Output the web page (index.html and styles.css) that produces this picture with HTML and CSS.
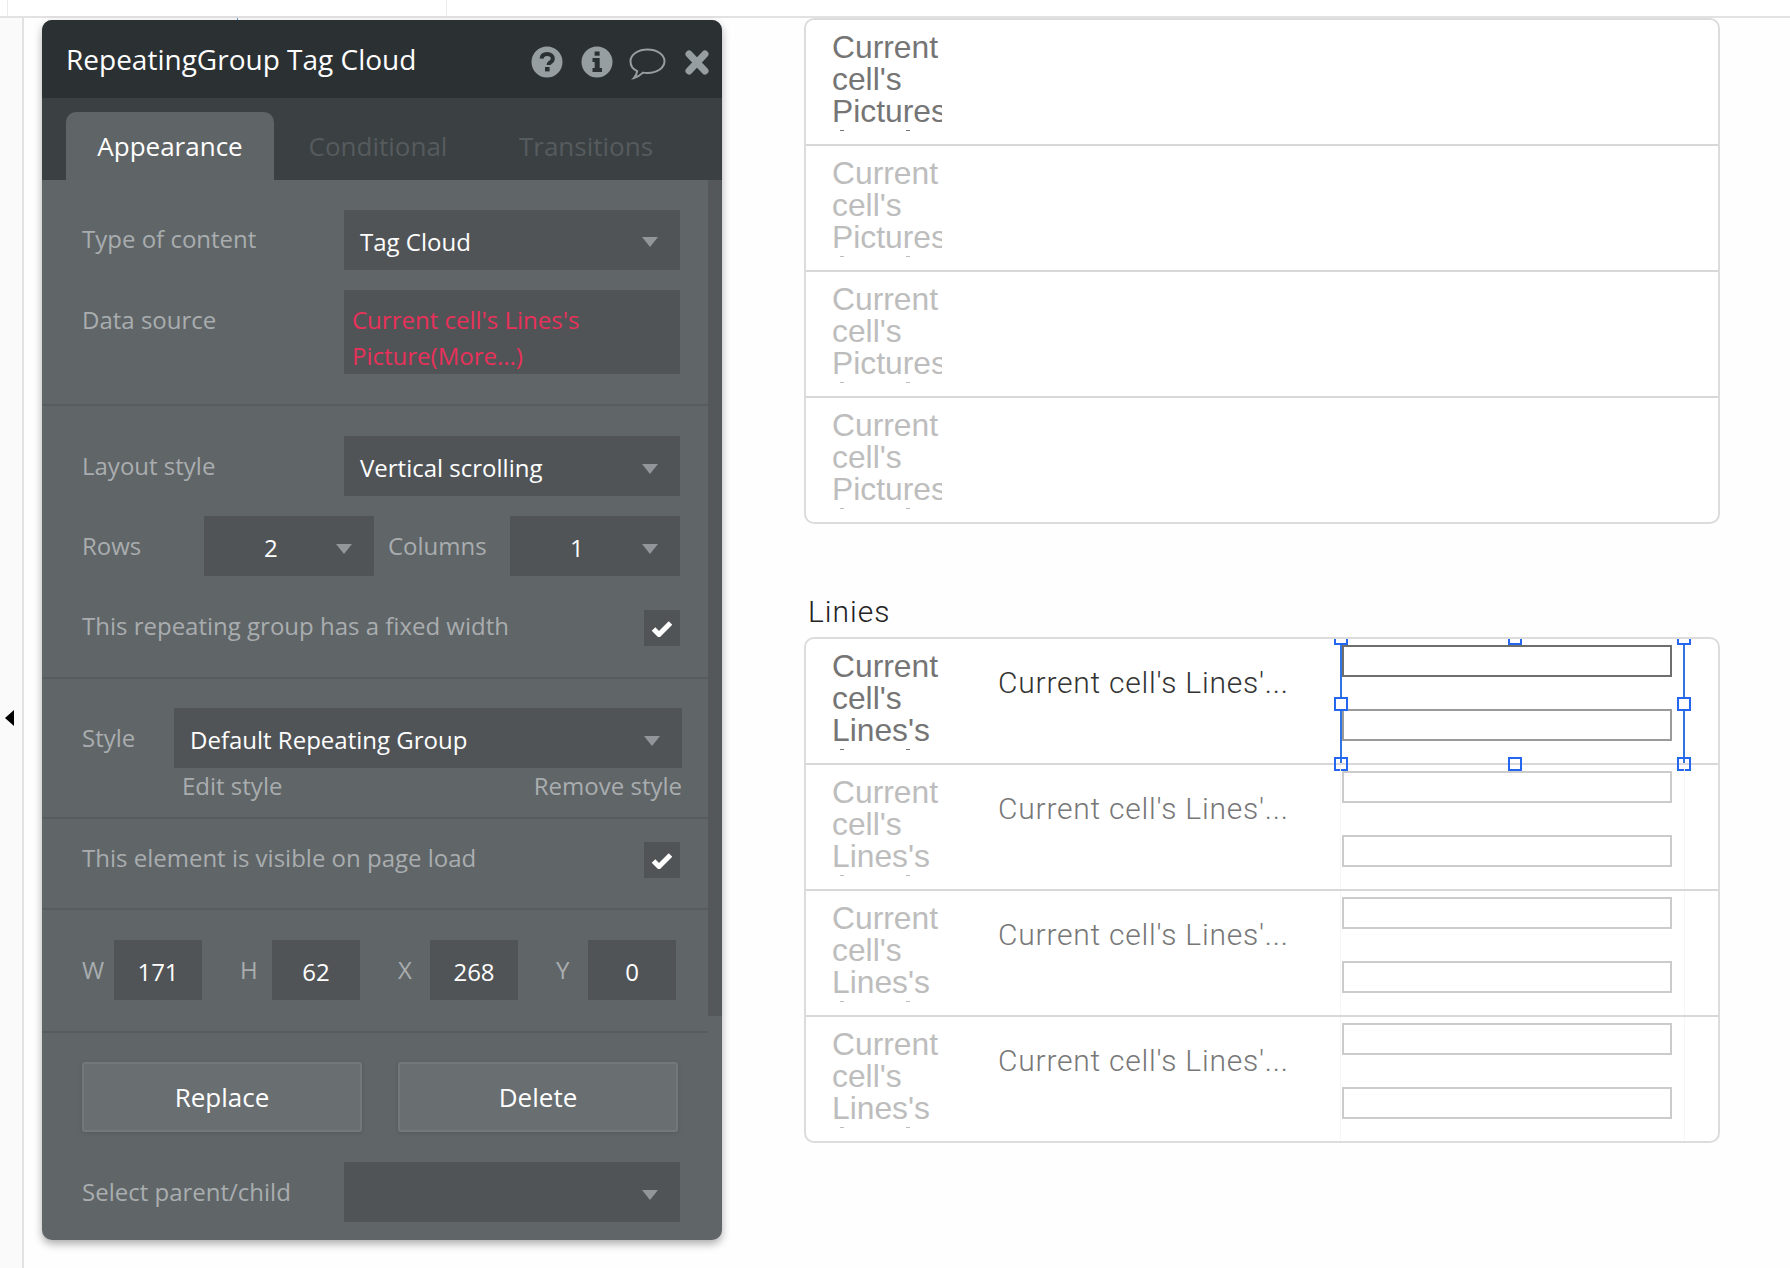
FILE: index.html
```html
<!DOCTYPE html>
<html lang="en">
<head>
<meta charset="utf-8">
<title>RepeatingGroup Tag Cloud</title>
<link rel="stylesheet" href="styles.css">
</head>
<body>
<div class="topbar"><span class="tb-a"></span><span class="tb-b"></span></div>
<div class="workspace">
  <div class="gutter"><span class="collapse"></span></div>
  <span class="ruler-tick"></span>
  <aside class="panel">
    <header class="panel-head">
      <h1 class="panel-title">RepeatingGroup Tag Cloud</h1>
      <div class="panel-icons">
        <svg class="ic" width="32" height="32" viewBox="0 0 32 32"><circle cx="16" cy="16" r="15.5" fill="#979ea1"/><path d="M10.6 12.6c.3-3 2.6-4.6 5.6-4.6 3.2 0 5.6 1.8 5.6 4.5 0 2-1 3-2.6 4-1.2.8-1.6 1.3-1.6 2.5" fill="none" stroke="#2b3033" stroke-width="4"/><rect x="14" y="21" width="4.6" height="4.400" fill="#2b3033"/></svg>
        <svg class="ic" width="32" height="32" viewBox="0 0 32 32"><circle cx="16" cy="16" r="15.5" fill="#979ea1"/><rect x="13.6" y="5.5" width="5" height="4.2" fill="#2b3033"/><path d="M11.5 12h7.2v10h2.3v4H11.5v-4h2.2v-6h-2.2z" fill="#2b3033"/></svg>
        <svg class="ic ic-bubble" width="37" height="32" viewBox="0 0 37 32"><path d="M18.5 1.5c9 0 17 4.800 17 11.800 0 7-8 11.700-17 11.700-1.500 0-3 0-4.500-.4-2.500 2.400-5.500 4.400-9 5.400 1.700-2 2.800-4 3.200-6.900C4.500 21.500 1.500 17.700 1.500 13.300c0-7 8-11.800 17-11.800z" fill="none" stroke="#979ea1" stroke-width="2"/></svg>
        <svg class="ic ic-close" width="24" height="25" viewBox="0 0 24 25"><path d="M4 4l16 17M20 4L4 21" fill="none" stroke="#979ea1" stroke-width="7" stroke-linecap="round"/></svg>
      </div>
    </header>
    <nav class="tabs">
      <span class="tab active">Appearance</span>
      <span class="tab tab-2">Conditional</span>
      <span class="tab tab-3">Transitions</span>
    </nav>
    <div class="panel-body">
      <span class="scrollbar"></span>
      <section class="section s1">
        <div class="row r60">
          <span class="label w-label">Type of content</span>
          <div class="select w-336"><span class="value">Tag Cloud</span><span class="arrow"></span></div>
        </div>
        <div class="row r84">
          <span class="label w-label label-top">Data source</span>
          <div class="expr">Current cell's Lines's<br>Picture(More...)</div>
        </div>
      </section>
      <div class="divider"></div>
      <section class="section s2">
        <div class="row r60">
          <span class="label w-label">Layout style</span>
          <div class="select w-336"><span class="value">Vertical scrolling</span><span class="arrow"></span></div>
        </div>
        <div class="row r60">
          <span class="label w-rows">Rows</span>
          <div class="select w-170 num"><span class="value">2</span><span class="arrow"></span></div>
          <span class="label w-cols">Columns</span>
          <div class="select w-170 num"><span class="value">1</span><span class="arrow"></span></div>
        </div>
        <div class="row check-row">
          <span class="label">This repeating group has a fixed width</span>
          <span class="check"><svg width="22" height="17" viewBox="0 0 22 17"><path d="M2.500 9l5.500 5.500L19.500 3" fill="none" stroke="#fff" stroke-width="5"/></svg></span>
        </div>
      </section>
      <div class="divider"></div>
      <section class="section s3">
        <div class="row r60">
          <span class="label w-style">Style</span>
          <div class="select w-508"><span class="value">Default Repeating Group</span><span class="arrow"></span></div>
        </div>
        <div class="style-links"><span>Edit style</span><span>Remove style</span></div>
      </section>
      <div class="divider"></div>
      <section class="section s4">
        <div class="row check-row">
          <span class="label">This element is visible on page load</span>
          <span class="check"><svg width="22" height="17" viewBox="0 0 22 17"><path d="M2.500 9l5.500 5.500L19.500 3" fill="none" stroke="#fff" stroke-width="5"/></svg></span>
        </div>
      </section>
      <div class="divider"></div>
      <section class="section s5">
        <div class="dims">
          <span class="label">W</span><span class="num-box">171</span>
          <span class="label dim-gap">H</span><span class="num-box">62</span>
          <span class="label dim-gap">X</span><span class="num-box">268</span>
          <span class="label dim-gap">Y</span><span class="num-box">0</span>
        </div>
      </section>
      <div class="divider"></div>
      <section class="section s6">
        <div class="buttons"><span class="btn">Replace</span><span class="btn">Delete</span></div>
        <div class="row r60">
          <span class="label w-label">Select parent/child</span>
          <div class="select w-336"><span class="value"></span><span class="arrow"></span></div>
        </div>
      </section>
    </div>
  </aside>
  <main class="canvas">
    <div class="rg">
      <div class="rg-row"><div class="cell-a"><span>Current<br>cell's<br>Pictures</span><i class="ticks"></i></div></div>
      <div class="rg-row faded"><div class="cell-a"><span>Current<br>cell's<br>Pictures</span><i class="ticks"></i></div></div>
      <div class="rg-row faded"><div class="cell-a"><span>Current<br>cell's<br>Pictures</span><i class="ticks"></i></div></div>
      <div class="rg-row faded"><div class="cell-a"><span>Current<br>cell's<br>Pictures</span><i class="ticks"></i></div></div>
    </div>
    <h2 class="rg-title">Linies</h2>
    <div class="rg">
      <div class="rg-row">
        <div class="cell-a"><span>Current<br>cell's<br>Lines's</span><i class="ticks"></i></div>
        <div class="cell-b">Current cell's Lines'...</div>
        <div class="cell-c selected">
          <div class="inp i-dark"></div><div class="inp i-mid"></div>
          <span class="hd hd-t hd-l"></span><span class="hd hd-t hd-c"></span><span class="hd hd-t hd-r"></span>
          <span class="hd hd-m hd-l"></span><span class="hd hd-m hd-r"></span>
          <span class="hd hd-b hd-l"></span><span class="hd hd-b hd-c"></span><span class="hd hd-b hd-r"></span>
        </div>
      </div>
      <div class="rg-row faded">
        <div class="cell-a"><span>Current<br>cell's<br>Lines's</span><i class="ticks"></i></div>
        <div class="cell-b">Current cell's Lines'...</div>
        <div class="cell-c"><div class="inp"></div><div class="inp"></div></div>
      </div>
      <div class="rg-row faded">
        <div class="cell-a"><span>Current<br>cell's<br>Lines's</span><i class="ticks"></i></div>
        <div class="cell-b">Current cell's Lines'...</div>
        <div class="cell-c"><div class="inp"></div><div class="inp"></div></div>
      </div>
      <div class="rg-row faded">
        <div class="cell-a"><span>Current<br>cell's<br>Lines's</span><i class="ticks"></i></div>
        <div class="cell-b">Current cell's Lines'...</div>
        <div class="cell-c"><div class="inp"></div><div class="inp"></div></div>
      </div>
    </div>
  </main>
</div>
</body>
</html>
```

FILE: styles.css
```css
* { box-sizing: border-box; }
html, body { margin: 0; height: 100%; }
body {
  width: 1790px; height: 1268px; overflow: hidden; background: #fefefe;
  font-family: "Open Sans", "Liberation Sans", sans-serif; color: #fff;
}
.topbar { height: 18px; border-bottom: 2px solid #e2e2e2; background: #fff; display: flex; }
.tb-a { width: 8px; border-right: 1px solid #ececec; }
.tb-b { width: 439px; border-right: 1px solid #ececec; }
.workspace { position: relative; display: flex; height: 1250px; align-items: flex-start; }
.gutter { width: 24px; height: 100%; background: #fafafa; border-right: 2px solid #e2e2e2; flex: none; position: relative; }
.collapse {
  position: absolute; left: 5px; top: 692px; width: 0; height: 0;
  border-style: solid; border-width: 8px 9px 8px 0; border-color: transparent #000 transparent transparent;
}
.ruler-tick { position: absolute; left: 237px; top: 0; width: 1px; height: 2px; background: #5a9bd0; }

/* property panel */
.panel {
  flex: none; width: 680px; height: 1220px; margin: 2px 0 0 18px;
  border-radius: 10px; background: #606568; box-shadow: 0 4px 9px rgba(0,0,0,.32); position: relative;
}
.panel-head { height: 78px; background: #2b3033; border-radius: 10px 10px 0 0; display: flex; align-items: center; padding-left: 24px; position: relative; }
.panel-title { margin: 0; font-weight: 400; font-size: 28px; line-height: 40px; }
.panel-icons { position: absolute; inset: 0; }
.ic { position: absolute; left: 489px; top: 26px; }
.ic + .ic { left: 539px; }
.ic.ic-bubble { left: 587px; top: 28px; }
.ic.ic-close { left: 643px; top: 30px; }
.tabs { height: 82px; background: #3b4043; display: flex; align-items: flex-end; padding-left: 24px; font-size: 26px; }
.tab { height: 68px; line-height: 69px; color: #565b5e; text-align: center; width: 208px; }
.tab.active { background: #5f6467; color: #fff; border-radius: 10px 10px 0 0; }
.panel-body { position: relative; height: 1060px; }
.scrollbar { position: absolute; right: 0; top: 0; width: 14px; height: 836px; background: #54585b; }
.section { padding: 0 0 0 40px; position: relative; font-size: 24px; }
.divider { height: 2px; width: 666px; background: #585c5f; }
.s1 { height: 224px; padding-top: 30px; }
.s2 { height: 271px; padding-top: 30px; }
.s3 { height: 138px; padding-top: 29px; }
.s4 { height: 89px; padding-top: 23px; }
.s5 { height: 121px; padding-top: 30px; }
.s6 { height: 207px; padding-top: 29px; }
.row { display: flex; align-items: center; }
.r60 { height: 60px; margin-bottom: 20px; }
.r84 { height: 84px; align-items: flex-start; }
.label { color: #a9adaf; white-space: nowrap; margin-bottom: 2px; }
.label-top { line-height: 59px; }
.s1 .label { margin-bottom: 3px; }
.check-row .label { margin-bottom: 6px; }
.w-label { width: 262px; flex: none; }
.w-rows { width: 122px; flex: none; }
.w-cols { width: 136px; flex: none; padding-left: 14px; }
.w-style { width: 92px; flex: none; }
.select { height: 60px; background: #505457; display: flex; align-items: center; justify-content: space-between; padding: 3px 22px 0 16px; flex: none; border-radius: 1px; }
.s1 .select { padding-top: 2px; }
.w-336 { width: 336px; }
.w-170 { width: 170px; }
.w-508 { width: 508px; }
.num { padding-left: 60px; }
.arrow { width: 0; height: 0; border-style: solid; border-width: 10px 8.500px 0; border-color: #92969a transparent transparent; flex: none; margin-top: 2px; }
.expr { width: 336px; height: 84px; background: #505457; color: #e8315a; padding: 12px 8px 0; line-height: 35.500px; flex: none; }
.check-row { justify-content: space-between; width: 598px; height: 36px; margin-top: 34px; }
.s4 .check-row { margin-top: 0; }
.check { width: 36px; height: 36px; background: #505457; display: flex; align-items: center; justify-content: center; }
.style-links { display: flex; justify-content: space-between; width: 500px; margin: -20px 0 0 100px; height: 36px; line-height: 36px; color: #a9adaf; }
.dims { display: grid; grid-template-columns: 32px 88px 70px 88px 70px 88px 70px 88px; height: 60px; align-items: center; }
.num-box { height: 60px; background: #505457; text-align: center; line-height: 64px; }
.dim-gap { padding-left: 38px; }
.buttons { display: flex; gap: 36px; margin-bottom: 30px; }
.btn { width: 280px; height: 70px; background: #696e71; border: 2px solid #73787b; border-radius: 3px; text-align: center; line-height: 66px; font-size: 26px; box-shadow: 0 1px 4px rgba(0,0,0,.12); }

/* canvas */
.canvas { flex: none; width: 916px; margin-left: 82px; }
.rg { width: 916px; border: 2px solid #dcdcdc; border-radius: 10px; background: #fff; }
.rg-row { height: 126px; border-bottom: 2px solid #d8d8d8; display: flex; align-items: flex-start; color: #757575; position: relative; }
.rg-row:last-child { height: 124px; border-bottom: 0; }
.rg-row.faded { color: #bdbdbd; }
.cell-a {
  width: 110px; height: 102px; margin: 11px 0 0 26px; overflow: hidden; flex: none;
  font-family: "Liberation Sans", Arial, sans-serif; font-size: 31.800px; line-height: 32px; white-space: nowrap;
}
.cell-a span { display: block; height: 96px; }
.ticks { display: block; height: 1px; margin-top: 3px; width: 70px; margin-left: 8px; border-left: 4px solid currentColor; border-right: 4px solid currentColor; }
.cell-b {
  width: 290px; margin: 26px 0 0 56px; flex: none; height: 36px; line-height: 36px; white-space: nowrap;
  font-family: Roboto, "Liberation Sans", sans-serif; font-size: 30px; font-weight: 300; color: #333; letter-spacing: .77px;
}
.faded .cell-b { color: #777; }
.cell-c { width: 345px; height: 124px; margin-left: 52px; flex: none; padding: 6px 0 0 1px; position: relative; border-left: 1px solid #f6f6f6; border-right: 1px solid #f6f6f6; }
.inp { width: 330px; height: 32px; border: 2px solid #cbcbcb; margin-bottom: 32px; background: #fff; }
.i-dark { border-color: #6e6e6e; }
.i-mid { border-color: #9a9a9a; }
.selected { border-left: 2px solid #2f74e0; border-right: 2px solid #2f74e0; padding-left: 0; }

/* selection handles */
.hd { position: absolute; width: 14px; height: 14px; border: 2px solid #2366f0; }
.hd-l { left: -8px; }
.hd-c { left: 166px; }
.hd-r { right: -8px; }
.hd-t { top: 0; height: 6px; border-top: 0; background: #fff; }
.hd-m { top: 58px; background: #fff; }
.hd-b { top: 118px; }

.rg-title {
  margin: 0; height: 113px; padding: 70px 0 0 4px; line-height: 36px; font-weight: 300; color: #222;
  font-family: Roboto, "Liberation Sans", sans-serif; font-size: 30px; letter-spacing: 1px;
}
```
